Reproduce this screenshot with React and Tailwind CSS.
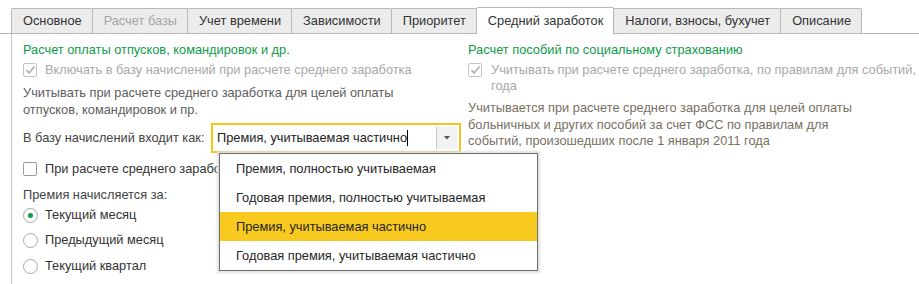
const tabs = [
  { label: "Основное" },
  { label: "Расчет базы", disabled: true },
  { label: "Учет времени" },
  { label: "Зависимости" },
  { label: "Приоритет" },
  { label: "Средний заработок", active: true },
  { label: "Налоги, взносы, бухучет" },
  { label: "Описание" },
];

const options = [
  "Премия, полностью учитываемая",
  "Годовая премия, полностью учитываемая",
  "Премия, учитываемая частично",
  "Годовая премия, учитываемая частично",
];

const CheckBox = ({ checked, disabled }) => (
  <span
    className={`w-[14px] h-[14px] shrink-0 rounded-[2px] border bg-white flex items-center justify-center ${
      disabled ? "border-[#c4c4c4]" : "border-[#9a9a9a]"
    }`}
  >
    {checked && (
      <svg width="11" height="10" viewBox="0 0 11 10">
        <path d="M1.5 5.2 L4.2 8 L9.5 1.5" fill="none" stroke="#b2b2b2" strokeWidth="1.8" />
      </svg>
    )}
  </span>
);

const Radio = ({ checked, label, className = "" }) => (
  <div className={`h-5 flex items-center gap-[7px] ${className}`}>
    <span className="w-[15px] h-[15px] rounded-full border border-[#a8a8a8] bg-white flex items-center justify-center">
      {checked && <span className="w-[5px] h-[5px] rounded-full bg-[#129a4c]" />}
    </span>
    <span>{label}</span>
  </div>
);

export default function App() {
  return (
    <div className="w-[919px] h-[284px] bg-white overflow-hidden font-['Liberation_Sans',Arial,sans-serif] text-[12.8px] text-[#333]">
      {/* Tabs */}
      <div className="h-[34px] pl-[11px] flex items-end border-b border-[#b8b8b8]">
        {tabs.map((t, i) => (
          <div
            key={t.label}
            className={`pl-[11px] pr-[10px] flex items-center rounded-t-[2px] border border-b-0 border-[#b8b8b8] whitespace-nowrap ${
              i > 0 ? "-ml-px" : ""
            } ${
              t.active
                ? "h-[27px] -mb-px bg-white relative z-10 pb-px"
                : "h-[25px] bg-[#ececec]"
            } ${t.disabled ? "text-[#a5a5a5]" : "text-[#333]"}`}
          >
            {t.label}
          </div>
        ))}
      </div>

      {/* Panel */}
      <div className="ml-[11px] h-[250px] border-l border-[#c4c4c4] pl-[11px] pt-2 flex">
        {/* Left column */}
        <div className="w-[445px] shrink-0">
          <div className="h-4 leading-4 text-[#0f9a4a]">Расчет оплаты отпусков, командировок и др.</div>
          <div className="mt-[2px] h-5 flex items-center gap-2 text-[#a8a8a8]">
            <CheckBox checked disabled />
            <span>Включать в базу начислений при расчете среднего заработка</span>
          </div>
          <div className="mt-1 leading-[17px] text-[#5e5e5e]">
            Учитывать при расчете среднего заработка для целей оплаты
            <br />
            отпусков, командировок и пр.
          </div>

          <div className="mt-[5px] h-[30px] flex items-center">
            <span className="w-[188px] shrink-0 text-[#444]">В базу начислений входит как:</span>
            <div className="relative">
              <div className="w-[250px] h-[30px] border-2 border-[#f6c51c] bg-white flex items-center pl-1">
                <span className="text-[#222]">Премия, учитываемая частично</span>
                <span className="w-px h-[16px] bg-black" />
                <span className="ml-auto mr-[2px] w-[21px] h-[22px] bg-[#f2f2f2] border-l border-[#c9c9c9] flex items-center justify-center">
                  <svg width="6" height="4" viewBox="0 0 6 4">
                    <path d="M0 0 H6 L3 3.5 Z" fill="#555" />
                  </svg>
                </span>
              </div>

              {/* Dropdown list */}
              <div className="absolute left-2 top-[30px] w-[319px] z-20 border border-[#6f6f6f] bg-white shadow-[0_0_2px_2px_#e2e2e2]">
                {options.map((o, i) => (
                  <div
                    key={o}
                    className={`h-[29px] pl-4 flex items-center text-[#262626] ${i === 2 ? "bg-[#f8ca1f]" : ""}`}
                  >
                    {o}
                  </div>
                ))}
              </div>
            </div>
          </div>

          <div className="mt-[6px] h-5 flex items-center gap-2 whitespace-nowrap">
            <CheckBox />
            <span>При расчете среднего заработка учитывать</span>
          </div>
          <div className="mt-2 h-4 leading-4 text-[#444]">Премия начисляется за:</div>
          <Radio checked label="Текущий месяц" className="mt-[2px]" />
          <Radio label="Предыдущий месяц" className="mt-[5px]" />
          <Radio label="Текущий квартал" className="mt-[6px]" />
        </div>

        {/* Right column */}
        <div className="flex-1 min-w-0 overflow-hidden whitespace-nowrap">
          <div className="h-4 leading-4 text-[#0f9a4a]">Расчет пособий по социальному страхованию</div>
          <div className="mt-1 flex gap-[9px] text-[#a8a8a8]">
            <span className="mt-px">
              <CheckBox checked disabled />
            </span>
            <div className="leading-4">
              Учитывать при расчете среднего заработка, по правилам для событий,
              <br />
              года
            </div>
          </div>
          <div className="mt-[6px] leading-[16.5px] text-[#77705f]">
            Учитывается при расчете среднего заработка для целей оплаты
            <br />
            больничных и других пособий за счет ФСС по правилам для
            <br />
            событий, произошедших после 1 января 2011 года
          </div>
        </div>
      </div>
    </div>
  );
}
